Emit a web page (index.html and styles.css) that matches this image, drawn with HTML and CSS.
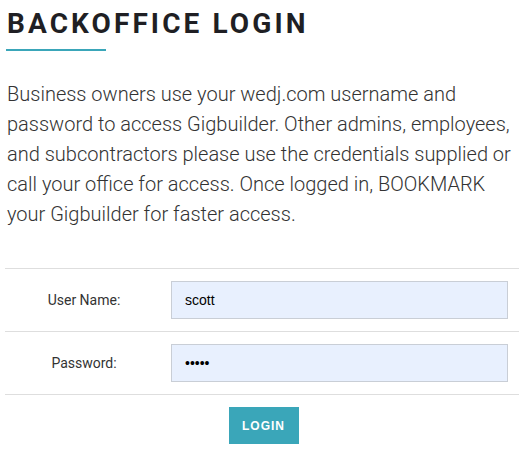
FILE: index.html
```html
<!DOCTYPE html>
<html lang="en">
<head>
    <meta charset="UTF-8">
    <meta name="viewport" content="width=device-width, initial-scale=1.0">
    <title>Backoffice Login</title>
    <link rel="stylesheet" href="styles.css">
</head>
<body>

    <!-- Page -->
    <div class="page">

        <h1 class="title">BACKOFFICE LOGIN</h1>
        <div class="title-bar"></div>

        <p class="intro">
            Business owners use your wedj.com username and password to access Gigbuilder.
            Other admins, employees, and subcontractors please use the credentials supplied
            or call your office for access. Once logged in, BOOKMARK your Gigbuilder for
            faster access.
        </p>

        <!-- Login Form -->
        <form class="login-form" autocomplete="off">
            <div class="form-row">
                <label for="username">User Name:</label>
                <div class="field">
                    <input type="text" id="username" name="username" value="scott">
                </div>
            </div>
            <div class="form-row">
                <label for="password">Password:</label>
                <div class="field">
                    <input type="password" id="password" name="password" value="scott">
                </div>
            </div>
            <div class="form-actions">
                <button type="submit">LOGIN</button>
            </div>
        </form>

    </div>

</body>
</html>
```

FILE: styles.css
```css
/* General styling */
* {
    margin: 0;
    padding: 0;
    box-sizing: border-box;
}

body {
    background-color: #fff;
    font-family: Roboto, Arial, sans-serif;
    color: #333;
}

.page {
    padding: 7px 0 0 5px;
}

/* Heading */
.title {
    font-size: 28px;
    font-weight: 700;
    letter-spacing: 3.1px;
    line-height: 34px;
    color: #1f1f24;
    padding-left: 2px;
}

.title-bar {
    width: 100px;
    height: 2px;
    margin: 8px 0 0 1px;
    background-color: #3aa6b9;
}

/* Intro text */
.intro {
    font-size: 20px;
    font-weight: 300;
    line-height: 30px;
    color: #333;
    margin-top: 28px;
    padding-left: 2px;
}

/* Login form */
.login-form {
    margin-top: 39px;
}

.form-row {
    display: flex;
    align-items: center;
    border-top: 1px solid #dedede;
    height: 63px;
}

.form-row label {
    width: 158px;
    text-align: center;
    font-family: Roboto, Arial, sans-serif;
    font-size: 14px;
    color: #333;
}

.field {
    flex: 1;
    padding: 0 11px 0 8px;
}

.field input {
    width: 100%;
    height: 38px;
    padding: 0 13px;
    border: 1px solid #c9ced6;
    background-color: #e8f0fe;
    font-family: Arial, "Liberation Sans", sans-serif;
    font-size: 14px;
    color: #000;
    outline: none;
}

.form-actions {
    border-top: 1px solid #dedede;
    display: flex;
    justify-content: center;
    padding-top: 12px;
}

.form-actions button {
    width: 70px;
    height: 37px;
    margin-left: 3px;
    border: none;
    background-color: #3aa6b9;
    color: #fff;
    font-family: Arial, "Liberation Sans", sans-serif;
    font-size: 12px;
    font-weight: 700;
    letter-spacing: 1px;
    cursor: pointer;
}
```
